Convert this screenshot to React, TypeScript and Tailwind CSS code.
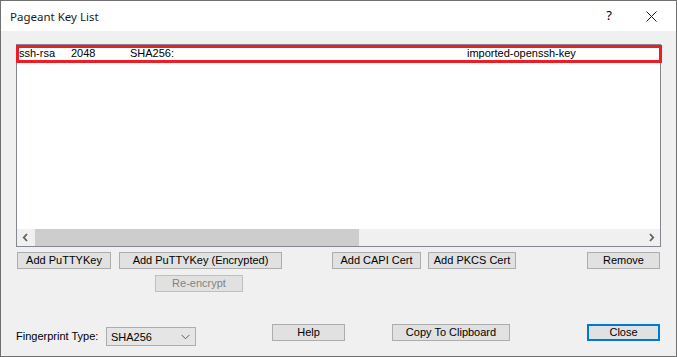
import React from 'react';

const Btn: React.FC<{ className?: string; disabled?: boolean; focused?: boolean; children: React.ReactNode }> = ({
  className = '',
  disabled,
  focused,
  children,
}) => (
  <button
    type="button"
    className={`h-[17px] shrink-0 bg-[#e1e1e1] text-[11px] leading-none flex items-center justify-center ${
      focused ? 'border-2 border-[#0078d7]' : 'border border-[#adadad]'
    } ${disabled ? 'text-[#838383] bg-[#cccccc] border-[#bfbfbf]' : 'text-black'} ${className}`}
  >
    {children}
  </button>
);

export default function App() {
  return (
    <div className="w-[677px] h-[357px] border border-[#707070] bg-[#f0f0f0] flex flex-col font-['Liberation_Sans',Arial,sans-serif] text-black overflow-hidden">
      {/* title bar */}
      <div className="h-[30px] shrink-0 bg-white flex items-center pl-[9px] pr-[19px]">
        <span className="text-[11.5px] font-['Noto_Sans',sans-serif] text-[#1a1a1a] mt-[1px]">Pageant Key List</span>
        <span className="ml-auto text-[13px] font-['Noto_Sans',sans-serif] mr-[34px]">?</span>
        <svg width="11" height="11" viewBox="0 0 11 11" className="mt-[1px]">
          <path d="M0.5 0.5 L10.5 10.5 M10.5 0.5 L0.5 10.5" stroke="#1a1a1a" strokeWidth="1" />
        </svg>
      </div>

      <div className="flex-1 flex flex-col px-[15px] pt-[13px]">
        {/* key list */}
        <div className="relative h-[203px] border border-[#828790] bg-white flex flex-col">
          <div className="h-[17px] flex items-center text-[11px] whitespace-pre relative">
            <span className="absolute left-[2px]">ssh-rsa</span>
            <span className="absolute left-[54px]">2048</span>
            <span className="absolute left-[113px]">SHA256:</span>
            <span className="absolute left-[450px]">imported-openssh-key</span>
          </div>
          <div className="absolute left-[-1px] top-0 w-[646px] h-[18px] border-[3px] border-[#ee1c25]" />
          <div className="flex-1" />
          {/* horizontal scrollbar */}
          <div className="h-[17px] flex bg-[#f0f0f0]">
            <div className="w-[17px] flex items-center justify-center">
              <svg width="7" height="9" viewBox="0 0 7 9">
                <path d="M5 1 L1.8 4.5 L5 8" stroke="#606060" strokeWidth="1.8" fill="none" />
              </svg>
            </div>
            <div className="ml-[1px] w-[324px] bg-[#cdcdcd]" />
            <div className="flex-1" />
            <div className="w-[17px] flex items-center justify-center">
              <svg width="7" height="9" viewBox="0 0 7 9">
                <path d="M2 1 L5.2 4.5 L2 8" stroke="#606060" strokeWidth="1.8" fill="none" />
              </svg>
            </div>
          </div>
        </div>

        {/* action buttons */}
        <div className="flex mt-[5px] pl-[1px] pr-[1px]">
          <Btn className="w-[94px]">Add PuTTYKey</Btn>
          <Btn className="w-[163px] ml-[8px]">Add PuTTYKey (Encrypted)</Btn>
          <Btn className="w-[89px] ml-[50px]">Add CAPI Cert</Btn>
          <Btn className="w-[88px] ml-[7px]">Add PKCS Cert</Btn>
          <Btn className="w-[73px] ml-auto">Remove</Btn>
        </div>
        <div className="flex mt-[6px] pl-[139px]">
          <Btn className="w-[88px]" disabled>
            Re-encrypt
          </Btn>
        </div>

        {/* bottom row */}
        <div className="flex items-start mt-[32px]">
          <div className="w-[90px] h-[19px] mt-[3px] flex items-center text-[11px]">Fingerprint Type:</div>
          <div className="w-[90px] h-[19px] mt-[3px] border border-[#adadad] bg-[#e5e5e5] flex items-center pl-[4px] pr-[4px] text-[11px]">
            <span className="mt-[1px]">SHA256</span>
            <svg width="9" height="6" viewBox="0 0 9 6" className="ml-auto mr-[1px]">
              <path d="M0.5 0.8 L4.5 4.8 L8.5 0.8" stroke="#606060" strokeWidth="1" fill="none" />
            </svg>
          </div>
          <Btn className="w-[73px] ml-[76px]">Help</Btn>
          <Btn className="w-[118px] ml-[47px]">Copy To Clipboard</Btn>
          <Btn className="w-[73px] ml-[77px]" focused>
            Close
          </Btn>
        </div>
      </div>
    </div>
  );
}
